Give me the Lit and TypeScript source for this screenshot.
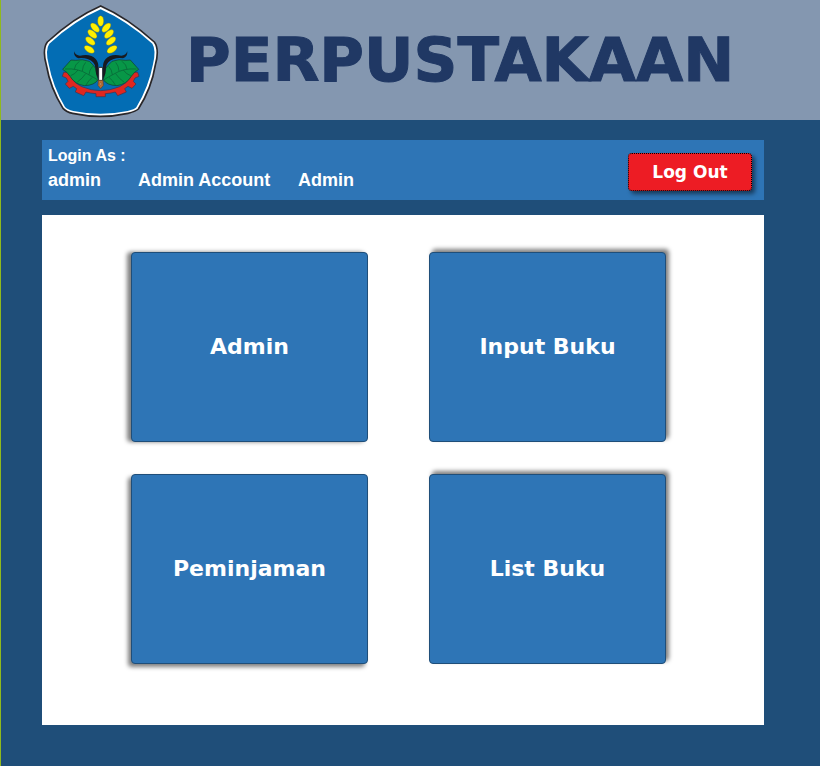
import { LitElement, html, css, svg } from "lit";
import { customElement, property } from "lit/decorators.js";

@customElement("school-emblem")
class SchoolEmblem extends LitElement {
  static styles = css`
    :host {
      display: block;
    }
    .emblem {
      display: block;
      width: 130px;
      height: 120px;
    }
  `;

  private grains() {
    const side = [
      [177, 83, 46],
      [169, 102, 42],
      [163, 123, 38],
      [160, 148, 32],
    ];
    return svg`
      <ellipse cx="194" cy="63" rx="9" ry="16" />
      ${side.map(
        ([x, y, tilt]) => svg`
          <ellipse cx=${x} cy=${y} rx="17" ry="9" transform="rotate(${tilt} ${x} ${y})" />
          <ellipse cx=${388 - x} cy=${y} rx="17" ry="9" transform="rotate(${-tilt} ${388 - x} ${y})" />
        `
      )}
    `;
  }

  private leaf() {
    return svg`
      <path d="M186 239 Q181 219 179 205 Q171 194 160 184 Q139 176 119 181 L105 180 Q96 190 80 208 Q94 216 102 229 Q116 253 145 257 Q176 256 186 239Z" fill="#079747" stroke="#143c2c" stroke-width="2" />
      <path d="M87 207 Q126 204 154 222 Q174 232 185 240 M115 208 Q116 194 130 184 M139 213 Q140 197 149 187 M159 224 Q160 209 170 199 M126 210 Q117 223 104 227 M149 221 Q139 236 124 246 M169 232 Q157 242 150 255" fill="none" stroke="#075d35" stroke-width="2" />
      <path d="M114 154 Q119 167 132 167 Q164 160 179 177 Q188 187 187 203 L187 237 Q178 222 178 204 Q177 184 155 177 Q142 173 127 175 Q113 170 114 154Z" fill="#171a20" />
    `;
  }

  render() {
    return html`
      <svg class="emblem" viewBox="0 0 390 360" role="img" aria-label="Lambang sekolah">
        <path d="M194 18 Q274 53 355 126 Q371 148 358 195 Q347 264 307 327 Q298 335 276 340 Q193 358 110 340 Q91 336 81 325 Q43 264 31 195 Q18 148 34 126 Q113 53 194 18Z" fill="#fff" stroke="#29272a" stroke-width="5" />
        <path d="M194 28 Q270 61 349 131 Q361 149 351 193 Q338 261 301 322 Q296 328 275 333 Q193 350 112 333 Q94 329 87 321 Q51 261 38 193 Q27 149 40 131 Q118 61 194 28Z" fill="#036db4" />
        <g fill="#fff000" stroke="#746f24" stroke-width="1">${this.grains()}</g>
        <path d="M83 217 L98 217 L104 230 Q116 251 137 260 Q166 272 194 272 Q222 272 251 260 Q272 251 284 230 L290 217 L305 217 L309 229 L297 234 L292 244 L300 252 L288 265 L276 259 L266 266 L271 276 L245 287 L238 276 Q225 280 208 281 L208 290 L180 290 L180 281 Q163 280 150 276 L143 287 L118 276 L122 266 L112 259 L100 265 L88 252 L96 244 L91 234 L79 229Z" fill="#df2720" stroke="#43304a" stroke-width="2" />
        <g>${this.leaf()}</g>
        <g transform="translate(388 0) scale(-1 1)">${this.leaf()}</g>
        <path d="M188 202 H200 V242 H188Z" fill="#fff" stroke="#24262b" stroke-width="3" />
        <path d="M187 241 H201 L202 256 L194 266 L186 256Z" fill="#bd6e30" stroke="#563c2c" stroke-width="2" />
        <circle cx="194" cy="252" r="3" fill="#d9a176" stroke="#563c2c" stroke-width="1" />
      </svg>
    `;
  }
}

@customElement("menu-tile")
class MenuTile extends LitElement {
  @property() label = "";
  @property() shade = "left";

  static styles = css`
    :host {
      display: block;
    }
    .tile {
      display: block;
      box-sizing: border-box;
      width: 100%;
      min-height: 190px;
      padding: 0 8px;
      border: 1px solid #1f4e79;
      border-radius: 4px;
      background: #2e75b6;
      color: #fff;
      font: 900 22px/32px "DejaVu Sans", sans-serif;
      cursor: pointer;
    }
    .left {
      box-shadow: -4px 0 4px rgba(0, 0, 0, 0.5);
    }
    .top-right {
      box-shadow: 3px -3px 4px rgba(0, 0, 0, 0.5);
    }
    .bottom-left {
      box-shadow: -3px 3px 4px rgba(0, 0, 0, 0.5);
    }
  `;

  render() {
    return html`<button class="tile ${this.shade}" type="button">${this.label}</button>`;
  }
}

@customElement("app-root")
class AppRoot extends LitElement {
  static styles = css`
    :host {
      display: block;
      box-sizing: border-box;
      min-height: 100vh;
      border-left: 1px solid #8fb91c;
      background: #1f4e79;
      font-family: "Liberation Sans", Arial, sans-serif;
    }
    .banner {
      display: flex;
      align-items: center;
      gap: 20px;
      height: 120px;
      padding-left: 35px;
      background: #8497b0;
    }
    .title {
      margin: 0;
      color: #203864;
      font: 900 61px/116px "DejaVu Sans", sans-serif;
      -webkit-text-stroke: 1px #203864;
    }
    .content {
      display: flex;
      flex-direction: column;
      gap: 15px;
      padding: 20px 56px 41px 41px;
    }
    .session {
      display: flex;
      align-items: center;
      justify-content: space-between;
      min-height: 60px;
      box-sizing: border-box;
      padding: 4px 12px 4px 6px;
      background: #2e75b6;
      color: #fff;
      font-weight: 700;
    }
    .who {
      padding-bottom: 4px;
    }
    .caption {
      margin: 0;
      font-size: 16px;
      line-height: 24px;
    }
    .account {
      display: grid;
      grid-template-columns: 90px 160px auto;
      font-size: 18px;
      line-height: 24px;
    }
    .logout {
      box-sizing: border-box;
      height: 38px;
      min-width: 124px;
      margin-top: 4px;
      padding: 0 8px;
      border: 1px dotted #000;
      border-radius: 4px;
      background: #ed1c24;
      box-shadow: 3px 3px 4px rgba(0, 0, 0, 0.5);
      color: #fff;
      font: 900 17px/24px "DejaVu Sans", sans-serif;
      cursor: pointer;
    }
    .menu {
      display: grid;
      grid-template-columns: 1fr 1fr;
      gap: 32px 61px;
      padding: 37px 98px 61px 89px;
      background: #fff;
    }
  `;

  render() {
    return html`
      <header class="banner">
        <school-emblem></school-emblem>
        <h1 class="title">PERPUSTAKAAN</h1>
      </header>
      <main class="content">
        <section class="session">
          <div class="who">
            <p class="caption">Login As :</p>
            <div class="account">
              <span>admin</span><span>Admin Account</span><span>Admin</span>
            </div>
          </div>
          <button class="logout" type="button">Log Out</button>
        </section>
        <nav class="menu">
          <menu-tile label="Admin" shade="left"></menu-tile>
          <menu-tile label="Input Buku" shade="top-right"></menu-tile>
          <menu-tile label="Peminjaman" shade="bottom-left"></menu-tile>
          <menu-tile label="List Buku" shade="top-right"></menu-tile>
        </nav>
      </main>
    `;
  }
}
